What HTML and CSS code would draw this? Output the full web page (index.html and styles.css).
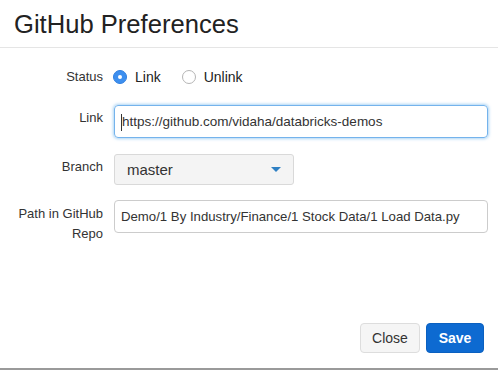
FILE: index.html
```html
<!DOCTYPE html>
<html>
<head>
<meta charset="utf-8">
<link rel="stylesheet" href="styles.css">
</head>
<body>
<div class="modal">
  <div class="header"><h1 class="title">GitHub Preferences</h1></div>
  <div class="body">
    <div class="row row-status">
      <div class="label">Status</div>
      <div class="radios">
        <span class="radio checked"></span><span class="radio-text">Link</span>
        <span class="radio"></span><span class="radio-text">Unlink</span>
      </div>
    </div>
    <div class="row row-link">
      <div class="label">Link</div>
      <div class="input focused"><span class="cursor"></span>https://github.com/vidaha/databricks-demos</div>
    </div>
    <div class="row row-branch">
      <div class="label">Branch</div>
      <div class="select"><span>master</span><span class="caret"></span></div>
    </div>
    <div class="row row-path">
      <div class="label">Path in GitHub Repo</div>
      <div class="input">Demo/1 By Industry/Finance/1 Stock Data/1 Load Data.py</div>
    </div>
  </div>
  <div class="footer">
    <button class="btn btn-default">Close</button>
    <button class="btn btn-primary">Save</button>
  </div>
</div>
</body>
</html>
```
FILE: styles.css
```css
html, body { margin: 0; padding: 0; background: #fff; }
body { font-family: "Liberation Sans", Arial, sans-serif; color: #333; }
.modal {
  width: 498px; height: 370px; box-sizing: border-box;
  border-bottom: 2px solid #9a9a9a;
  display: flex; flex-direction: column;
}
.header { height: 47px; border-bottom: 1px solid #e5e5e5; box-sizing: content-box; padding: 0 14px; display: flex; align-items: center; }
.title { margin: 0; font-size: 25.6px; font-weight: normal; color: #222; line-height: 28px; }
.body { flex: 1; padding-top: 19px; }
.row { display: flex; align-items: flex-start; }
.label { width: 103px; box-sizing: border-box; padding-left: 14px; padding-right: 0; text-align: right; font-size: 13px; line-height: 20px; color: #333; padding-top: 3px; flex: none; }
.row-status .label { padding-top: 0; }
.row-status { height: 20px; }
.row-link { margin-top: 18px; }
.row-branch { margin-top: 16px; }
.row-path { margin-top: 15px; }
.row-path .label { padding-top: 4px; }
.radios { margin-left: 10px; display: flex; align-items: center; height: 20px; font-size: 14px; }
.radio { width: 14px; height: 14px; box-sizing: border-box; border-radius: 50%; border: 1px solid #b5b5b5; background: #fff; display: inline-block; position: relative; }
.radio.checked { background: #3d8fef; border-color: #2f7fe0; }
.radio.checked::after { content: ""; position: absolute; left: 4px; top: 4px; width: 4px; height: 4px; border-radius: 50%; background: #fff; }
.radio-text { margin-left: 8px; margin-right: 21px; color: #222; }
.input {
  margin-left: 11px; width: 374px; height: 33px; box-sizing: border-box;
  border: 1px solid #ccc; border-radius: 4px; padding: 0 6px;
  font-size: 13.5px; line-height: 31px; color: #333; white-space: nowrap; overflow: hidden;
}
.row-path .input { font-size: 13.2px; }
.input.focused { border-color: #74b3ec; box-shadow: 0 0 3px 1px rgba(102,175,233,0.55); }
.cursor { display: inline-block; width: 1px; height: 17px; background: #333; vertical-align: middle; margin-right: 0; }
.select {
  margin-left: 11px; width: 180px; height: 31px; box-sizing: border-box;
  border: 1px solid #d9d9d9; border-radius: 3px; background: #f4f4f4;
  display: flex; align-items: center; justify-content: space-between; padding: 0 12px 0 12px;
  font-size: 15px; color: #333;
}
.caret { width: 0; height: 0; border-left: 5px solid transparent; border-right: 5px solid transparent; border-top: 5px solid #2f80c3; }
.footer { display: flex; justify-content: flex-end; gap: 6px; padding: 0 14px 15px 0; }
.btn { height: 30px; box-sizing: border-box; border-radius: 4px; font-family: "Liberation Sans", Arial, sans-serif; font-size: 14px; padding: 0 10px; cursor: pointer; }
.btn-default { background: #f5f5f5; border: 1px solid #ddd; color: #333; width: 60px; }
.btn-primary { background: #0d6ad1; border: 1px solid #0a60c0; color: #fff; font-weight: bold; width: 58px; }
```
